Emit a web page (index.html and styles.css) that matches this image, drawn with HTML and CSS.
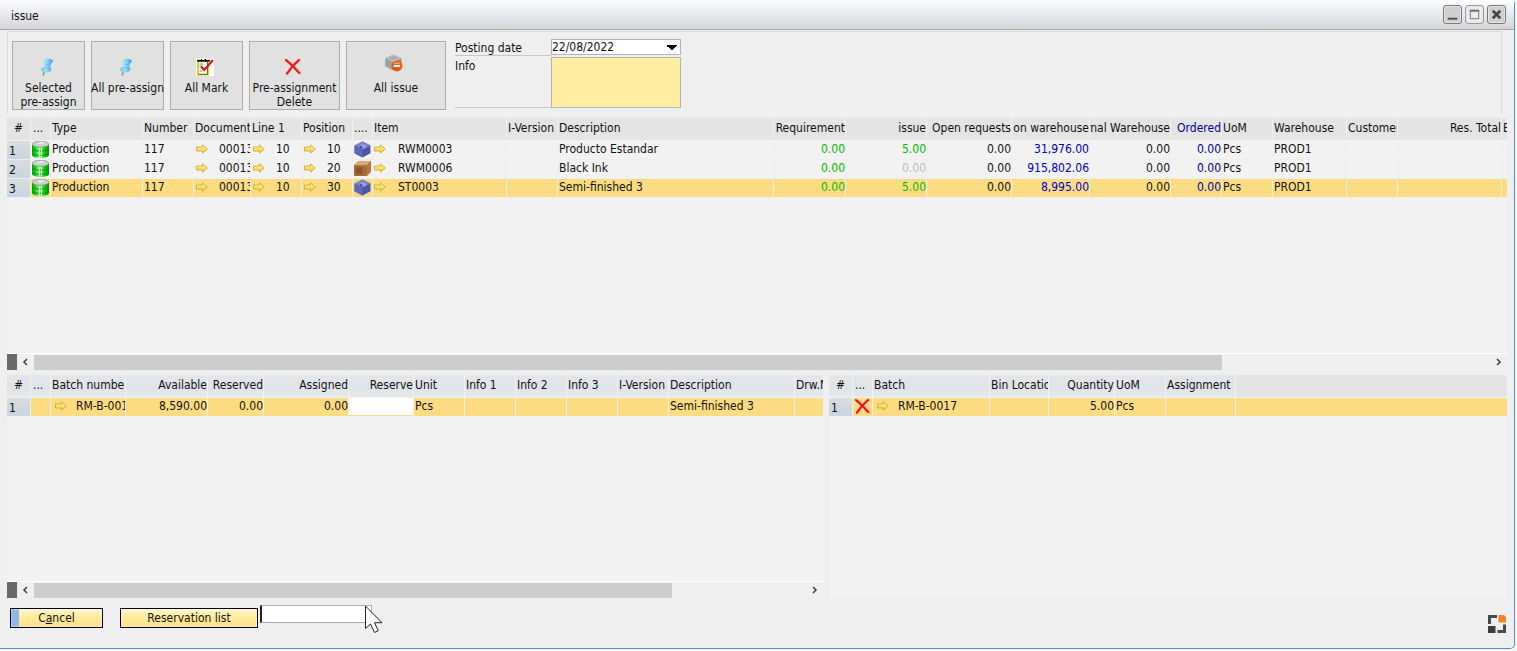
FILE: index.html
```html
<!DOCTYPE html>
<html lang="en">
<head>
<meta charset="utf-8">
<title>issue</title>
<link rel="stylesheet" href="styles.css">
</head>
<body>
<svg class="defs" aria-hidden="true">
  <linearGradient id="gold" x1="0" y1="0" x2="0" y2="1"><stop offset="0" stop-color="#fff7b0"/><stop offset="1" stop-color="#f3cb2c"/></linearGradient>
  <linearGradient id="green" x1="0" y1="0" x2="1" y2="0"><stop offset="0" stop-color="#0a9a0a"/><stop offset=".2" stop-color="#0fd90f"/><stop offset=".45" stop-color="#a8ffa0"/><stop offset=".7" stop-color="#12d812"/><stop offset="1" stop-color="#078a07"/></linearGradient>
  <linearGradient id="sky" x1="0" y1="0" x2="1" y2="0"><stop offset="0" stop-color="#5cc0ea"/><stop offset=".4" stop-color="#9fe2fa"/><stop offset="1" stop-color="#3a9fd2"/></linearGradient>
  <symbol id="arrow" viewBox="0 0 12 10"><path d="M.5 3h6V.8L11.3 5 6.500 9.200V7h-6z" fill="url(#gold)" stroke="#cdab30" stroke-width=".9"/></symbol>
  <symbol id="barrel" viewBox="0 0 16 16"><path d="M0 3v10c0 4 16 4 16 0V3z" fill="url(#green)"/><path d="M0 7.500c2 2.500 14 2.500 16 0M0 11.500c2 2.500 14 2.500 16 0" fill="none" stroke="#0a9010" stroke-width="1"/><path d="M7 6.500v9M9 6.500v9" stroke="#e6ffe6" stroke-width=".8"/><ellipse cx="8" cy="3" rx="7.800" ry="2.800" fill="#c9d3cb" stroke="#8b978d" stroke-width=".7"/><path d="M6 2.300l5-.6" stroke="#fff"/></symbol>
  <symbol id="cube" viewBox="0 0 16 16"><path d="M8 .5l7.500 3.700v7.300L8 15.500.5 11.500V4.200z" fill="#4d56a5"/><path d="M8 .5l7.500 3.700L8 8 .5 4.200z" fill="#7b84cf"/><path d="M.5 4.200L8 8v7.500l-7.500-4z" fill="#5f68b8"/><path d="M5.500 4.300l2.500-1.500 3 1.500v2L8 7.600 5.500 6.300z" fill="#9aa3e2"/><path d="M5.500 4.300L8 5.500v2L5.500 6.300z" fill="#464f9c"/></symbol>
  <symbol id="box" viewBox="0 0 16 16"><path d="M4 1h12v10l-4 4H0V5z" fill="#c08749"/><path d="M4 1h12l-4 4H0z" fill="#d9a96e"/><path d="M16 1v10l-4 4V5z" fill="#b5773c"/><path d="M0 5h12v10H0z" fill="#a56a35"/><path d="M2 7h6v6H2z" fill="#8d5526"/></symbol>
  <symbol id="cross" viewBox="-1 -1 18 18"><path d="M1 1c5 4 10 8 14 13M14 1C9 5 5 10 2 15" fill="none" stroke="#f7a49c" stroke-width="3" stroke-linecap="round"/><path d="M1 1c5 4 9 8 13 13M14 1C9 5 5 10 2 14.500" fill="none" stroke="#e8130f" stroke-width="2" stroke-linecap="round"/></symbol>
  <symbol id="pin" viewBox="0 0 14 18"><path d="M4.500 13L3 17.500" stroke="#8b9298" stroke-width="1.600"/><path d="M5 1.500C7 .2 12 .8 12.800 2.500c.4 1.600-1 2.500-1.800 3l-.8 3.500c1.800 1.200 1.400 3 .4 4-2.500 2-7 1.800-9.300-.5C.5 10.800 2 9.500 4 9l1-3.300C3.600 4.500 3.600 2.500 5 1.500z" fill="url(#sky)"/><path d="M5.500 6c1.500.8 4 .8 5.300 0M4.200 9.300c2 .9 4.300.9 6 0" fill="none" stroke="#5ab4de" stroke-width=".8"/></symbol>
  <symbol id="check" viewBox="0 0 18 18"><path d="M0 0h18v18H0z" fill="#fff"/><path d="M2 2.500h10v14H2z" fill="#fff" stroke="#d8d01e" stroke-width="2"/><path d="M2.500 3.500h9v13h-9" fill="none" stroke="#55521b" stroke-width=".8"/><path d="M1 2h4V1h5v1h4v1.500H1z" fill="#111"/><path d="M6 1h2.500v1H6z" fill="#fff"/><path d="M3.500 6h4M3.500 8h3M3.500 13h3" stroke="#8a8aa8"/><path d="M5 8.500l3.200 3.500L17 2" fill="none" stroke="#e0100d" stroke-width="2"/></symbol>
  <symbol id="issue" viewBox="0 0 17 17"><path d="M8 .5l7.500 3.500v7.500L8 15.500.5 11.500V4z" fill="#8d8f91"/><path d="M8 .5L15.500 4 8 8 .5 4z" fill="#bfc1c3"/><path d="M.5 4L8 8v7.500l-7.500-4z" fill="#9ea0a2"/><path d="M3 4l5-2.300L12.500 4 8 6z" fill="#a9abad"/><circle cx="11.300" cy="11.300" r="5.200" fill="#e8590e"/><path d="M7.500 9.500a4.500 4 0 0 1 7.600 0z" fill="#f79a5c"/><path d="M8.300 10.300h6v2h-6z" fill="#fff"/></symbol>
</svg>

<main class="window">
  <header class="titlebar">
    <h1 class="title">issue</h1>
    <div class="window-buttons">
      <button class="win" aria-label="Minimize"><svg viewBox="0 0 16 16"><path d="M3 12.500h10" stroke="#4c4c4c" stroke-width="2"/></svg></button>
      <button class="win light" aria-label="Maximize"><svg viewBox="0 0 16 16"><path d="M3.500 3.500h9v9h-9z" fill="none" stroke="#707070"/><path d="M3 4h10" stroke="#707070" stroke-width="2"/></svg></button>
      <button class="win" aria-label="Close"><svg viewBox="0 0 16 16"><path d="M4 4l8 8M12 4l-8 8" stroke="#444" stroke-width="2.800"/></svg></button>
    </div>
  </header>

  <section class="toolbar">
    <button class="tool"><svg class="tool-icon"><use href="#pin"/></svg><span>Selected<br>pre-assign</span></button>
    <button class="tool"><svg class="tool-icon"><use href="#pin"/></svg><span>All pre-assign</span></button>
    <button class="tool"><svg class="tool-icon"><use href="#check"/></svg><span>All Mark</span></button>
    <button class="tool wide"><svg class="tool-icon"><use href="#cross"/></svg><span>Pre-assignment<br>Delete</span></button>
    <button class="tool widest"><svg class="tool-icon"><use href="#issue"/></svg><span>All issue</span></button>
    <form class="fields">
      <label for="date">Posting date</label>
      <select id="date"><option>22/08/2022</option></select>
      <label class="tall" for="info">Info</label>
      <textarea id="info"></textarea>
    </form>
  </section>

  <section class="panel main-panel">
    <div class="grid-area">
      <table class="grid">
        <colgroup><col class="w24"><col class="w20"><col class="w92"><col class="w51"><col class="w57"><col class="w51"><col class="w51"><col class="w20"><col class="w134"><col class="w51"><col class="w216"><col class="w72"><col class="w81"><col class="w85"><col class="w78"><col class="w81"><col class="w51"><col class="w51"><col class="w74"><col class="w51"><col class="w104"><col></colgroup>
        <thead><tr><th class="mid">#</th><th class="dots">...</th><th>Type</th><th>Number</th><th>Document</th><th>Line 1</th><th>Position</th><th>....</th><th>Item</th><th>I-Version</th><th>Description</th><th class="num"><div class="end">Requirement</div></th><th class="num"><div class="end">issue</div></th><th class="num"><div class="end">Open requests</div></th><th class="num"><div class="end">on warehouse</div></th><th class="num"><div class="end">External Warehouse</div></th><th class="num navy"><div class="end">Ordered</div></th><th>UoM</th><th>Warehouse</th><th>Customer</th><th class="num"><div class="end">Res. Total</div></th><th>E</th></tr></thead>
        <tbody>
          <tr><th scope="row">1</th><td class="pic"><svg><use href="#barrel"/></svg></td><td>Production</td><td>117</td><td><div class="link"><svg><use href="#arrow"/></svg>00013</div></td><td><div class="link"><svg><use href="#arrow"/></svg>10</div></td><td><div class="link"><svg><use href="#arrow"/></svg>10</div></td><td class="pic"><svg><use href="#cube"/></svg></td><td><div class="link tight"><svg><use href="#arrow"/></svg>RWM0003</div></td><td></td><td>Producto Estandar</td><td class="num green">0.00</td><td class="num green">5.00</td><td class="num">0.00</td><td class="num blue">31,976.00</td><td class="num">0.00</td><td class="num navy">0.00</td><td>Pcs</td><td>PROD1</td><td></td><td></td><td></td></tr>
          <tr><th scope="row">2</th><td class="pic"><svg><use href="#barrel"/></svg></td><td>Production</td><td>117</td><td><div class="link"><svg><use href="#arrow"/></svg>00013</div></td><td><div class="link"><svg><use href="#arrow"/></svg>10</div></td><td><div class="link"><svg><use href="#arrow"/></svg>20</div></td><td class="pic"><svg><use href="#box"/></svg></td><td><div class="link tight"><svg><use href="#arrow"/></svg>RWM0006</div></td><td></td><td>Black Ink</td><td class="num green">0.00</td><td class="num faint">0.00</td><td class="num">0.00</td><td class="num blue">915,802.06</td><td class="num">0.00</td><td class="num navy">0.00</td><td>Pcs</td><td>PROD1</td><td></td><td></td><td></td></tr>
          <tr class="selected"><th scope="row">3</th><td class="pic"><svg><use href="#barrel"/></svg></td><td>Production</td><td>117</td><td><div class="link"><svg><use href="#arrow"/></svg>00013</div></td><td><div class="link"><svg><use href="#arrow"/></svg>10</div></td><td><div class="link"><svg><use href="#arrow"/></svg>30</div></td><td class="pic"><svg><use href="#cube"/></svg></td><td><div class="link tight"><svg><use href="#arrow"/></svg>ST0003</div></td><td></td><td>Semi-finished 3</td><td class="num green">0.00</td><td class="num green">5.00</td><td class="num">0.00</td><td class="num blue">8,995.00</td><td class="num">0.00</td><td class="num navy">0.00</td><td>Pcs</td><td>PROD1</td><td></td><td></td><td></td></tr>
        </tbody>
      </table>
    </div>
    <div class="scrollbar"><i class="grip"></i><svg class="chev" viewBox="0 0 6 8"><path d="M5 1L2 4l3 3" fill="none" stroke="#444" stroke-width="1.600"/></svg><div class="track"><div class="thumb main-thumb"></div></div><svg class="chev next" viewBox="0 0 6 8"><path d="M1 1l3 3-3 3" fill="none" stroke="#444" stroke-width="1.600"/></svg></div>
  </section>

  <div class="split">
    <section class="panel">
      <div class="grid-area">
        <table class="grid cool">
          <colgroup><col class="w24"><col class="w20"><col class="w75"><col class="w82"><col class="w56"><col class="w85"><col class="w65"><col class="w51"><col class="w51"><col class="w51"><col class="w51"><col class="w51"><col class="w126"><col></colgroup>
          <thead><tr><th class="mid">#</th><th class="dots">...</th><th>Batch number</th><th class="num">Available</th><th class="num">Reserved</th><th class="num">Assigned</th><th class="num">Reserve</th><th>Unit</th><th>Info 1</th><th>Info 2</th><th>Info 3</th><th>I-Version</th><th>Description</th><th>Drw.No.</th></tr></thead>
          <tbody><tr class="selected"><th scope="row">1</th><td></td><td><div class="link inset"><svg><use href="#arrow"/></svg>RM-B-0017</div></td><td class="num">8,590.00</td><td class="num">0.00</td><td class="num">0.00</td><td class="edit"><input type="text" aria-label="Reserve"></td><td>Pcs</td><td></td><td></td><td></td><td></td><td>Semi-finished 3</td><td></td></tr></tbody>
        </table>
      </div>
      <div class="scrollbar"><i class="grip"></i><svg class="chev" viewBox="0 0 6 8"><path d="M5 1L2 4l3 3" fill="none" stroke="#444" stroke-width="1.600"/></svg><div class="track"><div class="thumb batch-thumb"></div></div><svg class="chev next" viewBox="0 0 6 8"><path d="M1 1l3 3-3 3" fill="none" stroke="#444" stroke-width="1.600"/></svg></div>
    </section>
    <section class="panel">
      <div class="grid-area">
        <table class="grid cool">
          <colgroup><col class="w24"><col class="w20"><col class="w117"><col class="w59"><col class="w66"><col class="w51"><col class="w70"><col></colgroup>
          <thead><tr><th class="mid">#</th><th class="dots">...</th><th>Batch</th><th>Bin Location</th><th class="num">Quantity</th><th>UoM</th><th>Assignment</th><th class="blank"></th></tr></thead>
          <tbody><tr class="selected"><th scope="row">1</th><td class="pic"><svg><use href="#cross"/></svg></td><td><div class="link inset"><svg><use href="#arrow"/></svg>RM-B-0017</div></td><td></td><td class="num">5.00</td><td>Pcs</td><td></td><td></td></tr></tbody>
        </table>
      </div>
    </section>
  </div>

  <footer class="footer">
    <button class="action cancel">C<u>a</u>ncel</button>
    <button class="action reserve">Reservation list</button>
    <div class="entry">
      <input type="text" aria-label="Reservation">
      <svg class="cursor" viewBox="0 0 18 29"><path d="M.5 1v22.500l5-4.500 4 8.500 3.800-1.800-3.800-8h7.500z" fill="#fff" stroke="#222" stroke-width="1"/></svg>
    </div>
    <svg class="brand" viewBox="0 0 18 18"><path d="M0 0h9v3H3v6H0z" fill="#4a4a4a"/><path d="M10.500 0H16l2 2v5.500h-7.500z" fill="#f58025"/><path d="M0 11h7.500v7H0z" fill="#3d3d3d"/><path d="M18 9.500V18H9.500v-3H15V9.500z" fill="#4a4a4a"/></svg>
  </footer>
</main>
</body>
</html>
```
FILE: styles.css
```css
* { box-sizing: border-box; }
body {
  margin: 0;
  height: 100vh;
  padding: 0 2px 2px 0;
  background: #f7f7f7;
  color: #111;
  font: 12px/14px "DejaVu Sans Condensed", "DejaVu Sans", sans-serif;
}
button, input, select, textarea { font: inherit; color: inherit; margin: 0; border-radius: 0; }
svg { display: block; flex: none; }
.defs { position: absolute; width: 0; height: 0; }

.window {
  height: 100%;
  display: flex;
  flex-direction: column;
  background: #efefef;
  border: 1px solid #4a90e2;
  border-width: 0 1px 1px 0;
  border-radius: 0 4px 5px 0;
}
.titlebar {
  flex: none;
  height: 30px;
  padding: 0 8px 0 11px;
  display: flex;
  align-items: center;
  justify-content: space-between;
  background: linear-gradient(#fdfdff, #e9ebf0 45%, #d3d4d8);
  border-bottom: 1px solid #a5a5a5;
}
.title { margin: 0; padding-top: 3px; font-size: 12px; font-weight: normal; }
.window-buttons { display: flex; gap: 3px; }
.win { width: 19px; height: 19px; padding: 1px; border: 1px solid #777; border-radius: 3px; background: #cfcfcf; box-shadow: inset 0 0 0 1px #e6e6e6; }
.win.light { background: #ececec; border-color: #999; }
.win svg { width: 15px; height: 15px; }

.toolbar {
  flex: none;
  height: 83px;
  margin: 1px 12px 0 7px;
  padding: 7px 0 0 4px;
  display: flex;
  align-items: flex-start;
  gap: 6px;
  border: 1px solid #dadada;
  border-bottom-color: #f4f4f4;
}
.tool {
  flex: none;
  width: 73px;
  height: 69px;
  margin-top: 2px;
  padding: 16px 0 0;
  display: flex;
  flex-direction: column;
  align-items: center;
  justify-content: flex-start;
  gap: 5px;
  background: #e1e1e1;
  border: 1px solid #adadad;
  white-space: nowrap;
}
.tool-icon { width: 18px; height: 18px; margin-right: 4px; }
.tool.wide { width: 91px; }
.tool.widest { width: 100px; padding-top: 12px; gap: 9px; }
.fields { margin-left: 3px; display: grid; grid-template-columns: 96px 130px; row-gap: 1px; }
.fields label { height: 17px; padding-top: 2px; border-bottom: 1px solid #c6c6c6; }
.fields label.tall { height: 51px; }
.fields select {
  height: 16px;
  padding: 0;
  appearance: none;
  border: 1px solid #b2b2b2;
  background:
    conic-gradient(from -45deg at 50% 100%, #000 90deg, transparent 0) 0 0 / 0 0 no-repeat,
    linear-gradient(to bottom left, #000 50%, transparent 50%) 114px 5px / 6px 6px no-repeat,
    linear-gradient(to bottom right, #000 50%, transparent 50%) 120px 5px / 6px 6px no-repeat,
    #fff;
}
.fields textarea { height: 51px; resize: none; border: 1px solid #b2b2b2; background: #ffeea0; }

.panel { min-width: 0; display: flex; flex-direction: column; }
.main-panel { flex: 252 1 0; margin: 4px 7px 0; }
.grid-area { flex: 1; min-height: 0; background: #f2f2f2; overflow: hidden; }
.grid { width: 100%; table-layout: fixed; border-collapse: separate; border-spacing: 0; }
.grid th, .grid td {
  padding: 0 1px;
  overflow: hidden;
  white-space: nowrap;
  font-weight: normal;
  text-align: left;
  vertical-align: top;
  border-right: 1px solid #efefef;
}
.grid th:last-child, .grid td:last-child { border-right: 0; }
.grid thead th { height: 23px; padding-top: 3px; background: #e4e4e4; border-right-color: #f0f0f0; border-bottom: 1px solid #f2f2f2; }
.grid.cool thead th { background: linear-gradient(#e3e6e9, #dfe4e8 60%, #e7e9eb); }
.grid.cool thead th.blank { background: #e4e4e4; }
.grid tbody th, .grid tbody td { height: 19px; border-bottom: 1px solid #eee; }
.grid tbody td { padding-top: 1px; }
.grid tbody th { padding: 3px 2px 0; background: linear-gradient(#d9dde0, #ced6dd 70%, #c6d6e6); }
.grid .selected td { background: #fcdc82; border-right-color: #f4f0e4; }
.grid th.mid { text-align: center; }
.grid th.dots { padding-left: 2px; }
.grid .num { text-align: right; padding-left: 0; padding-right: 0; }
.end { display: flex; justify-content: flex-end; overflow: hidden; }
.grid tbody .pic { padding: 0 1px; }
.pic svg { width: 17px; height: 17px; }
.link { padding-left: 1px; display: flex; align-items: center; gap: 11px; }
.link.tight { padding-left: 0; gap: 12px; }
.link.inset { padding-left: 3px; gap: 9px; }
.link svg { width: 12px; height: 10px; }
.grid tbody .edit { padding: 0; }
.edit input { display: block; width: 100%; height: 17px; padding: 0 2px; border: 0; background: #fff; }
.green { color: #0b0; }
.blue { color: #00c; }
.navy { color: #009; }
.faint { color: #bbb; }

.w20 { width: 20px; } .w24 { width: 24px; } .w51 { width: 51px; } .w56 { width: 56px; }
.w57 { width: 57px; } .w59 { width: 59px; } .w65 { width: 65px; } .w66 { width: 66px; }
.w70 { width: 70px; } .w72 { width: 72px; } .w74 { width: 74px; } .w75 { width: 75px; }
.w78 { width: 78px; } .w81 { width: 81px; } .w82 { width: 82px; } .w85 { width: 85px; }
.w92 { width: 92px; } .w104 { width: 104px; } .w117 { width: 117px; } .w126 { width: 126px; }
.w134 { width: 134px; } .w216 { width: 216px; }

.scrollbar { flex: none; height: 17px; display: flex; align-items: center; border-top: 1px solid #fff; background: #f0f0f0; }
.grip { width: 10px; height: 100%; background: #696969; }
.chev { width: 6px; height: 8px; margin: 0 6px 0 5px; }
.chev.next { margin: 0 5px 0 6px; }
.track { flex: 1; height: 15px; }
.thumb { height: 100%; background: #cdcdcd; }
.main-thumb { width: 81.6%; }
.batch-thumb { width: 82.7%; }

.split { flex: 223 1 0; margin: 5px 7px 0; display: grid; grid-template-columns: 816fr 678fr; gap: 6px; }

.footer { flex: none; height: 50px; padding: 7px 8px 0 10px; display: flex; align-items: flex-start; }
.action { margin-top: 3px; height: 20px; padding: 0; border: 1px solid #000; background: linear-gradient(#fff6cf, #ffeb98 50%, #fbe18b); box-shadow: inset 0 0 2px #fff; }
.cancel { width: 93px; background: linear-gradient(90deg, #8fb8ea 8px, transparent 8px), linear-gradient(#fff6cf, #ffeb98 50%, #fbe18b); }
.reserve { width: 138px; margin-left: 17px; }
.entry { position: relative; margin-left: 2px; }
.entry input { display: block; width: 112px; height: 18px; padding: 0 2px; border: 1px solid #abadb3; border-left: 2px solid #222; background: #fff; }
.cursor { position: absolute; left: 105px; top: 0; width: 18px; height: 29px; }
.brand { width: 18px; height: 18px; margin: 10px 0 0 auto; }
```
